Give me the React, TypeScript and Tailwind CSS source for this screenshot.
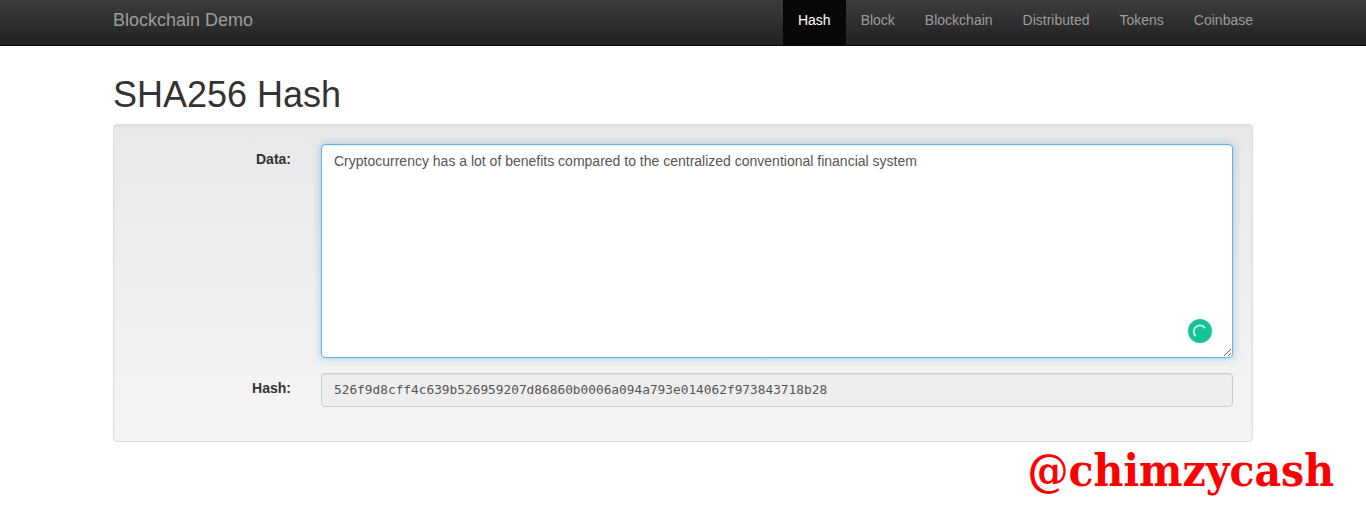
export default function App() {
  const items = ["Hash", "Block", "Blockchain", "Distributed", "Tokens", "Coinbase"];
  return (
    <div className="relative h-[513px] overflow-hidden bg-white font-['Liberation_Sans',sans-serif] text-[14px] leading-[20px] text-[#333]">
      <nav className="h-[46px] border-b border-[#080808] bg-gradient-to-b from-[#3c3c3c] to-[#222222]">
        <div className="mx-auto flex w-[1170px] justify-between pl-[15px]">
          <a className="h-[45px] py-[10px] text-[18px] leading-[20px] text-[#9d9d9d]">Blockchain Demo</a>
          <ul className="flex">
            {items.map((item, i) => (
              <li key={item}>
                <a className={i === 0
                  ? "block h-[45px] bg-[#080808] px-[15px] py-[10px] leading-[20px] text-white"
                  : "block h-[45px] px-[15px] py-[10px] leading-[20px] text-[#9d9d9d]"}>{item}</a>
              </li>
            ))}
          </ul>
        </div>
      </nav>
      <main className="mx-auto w-[1170px] px-[15px]">
        <h1 className="mt-[29px] mb-[9px] text-[36px] leading-[39.6px] font-medium text-[#333]">SHA256 Hash</h1>
        <section className="flex flex-col gap-[15px] rounded border border-[#dcdcdc] bg-gradient-to-b from-[#e8e8e8] to-[#f5f5f5] p-[19px] pb-[34px] shadow-[inset_0_1px_3px_rgba(0,0,0,0.05)]">
          <div className="flex">
            <label className="w-[158px] pt-[5px] text-right font-bold">Data:</label>
            <div className="relative ml-[30px] w-[912px]">
              <textarea
                readOnly
                rows={10}
                defaultValue="Cryptocurrency has a lot of benefits compared to the centralized conventional financial system"
                className="block h-[214px] w-full resize-y rounded border border-[#66afe9] bg-white px-[12px] py-[6px] text-[#555] shadow-[inset_0_1px_1px_rgba(0,0,0,0.075),0_0_8px_rgba(102,175,233,0.6)] outline-none"
              />
              <div className="absolute right-[21px] bottom-[15px] flex h-[24px] w-[24px] items-center justify-center rounded-full bg-[#15c39a]">
                <svg width="16" height="16" viewBox="0 0 16 16" fill="none">
                  <path d="M3.2 12.5 A6 6 0 0 1 12.6 4.6" stroke="#d9f5ee" strokeWidth="1.7" strokeLinecap="round" />
                </svg>
              </div>
            </div>
          </div>
          <div className="flex">
            <label className="w-[158px] pt-[5px] text-right font-bold">Hash:</label>
            <div className="ml-[30px] flex h-[34px] w-[912px] items-center rounded border border-[#ccc] bg-[#eeeeee] px-[12px] font-['DejaVu_Sans_Mono',monospace] text-[12.8px] text-[#555] shadow-[inset_0_1px_1px_rgba(0,0,0,0.075)]">
              526f9d8cff4c639b526959207d86860b0006a094a793e014062f973843718b28
            </div>
          </div>
        </section>
      </main>
      <div className="absolute top-[440px] right-[32px] font-['DejaVu_Serif_Condensed',serif] text-[45.6px] leading-[60px] font-bold text-[#ff0000]">@chimzycash</div>
    </div>
  );
}
